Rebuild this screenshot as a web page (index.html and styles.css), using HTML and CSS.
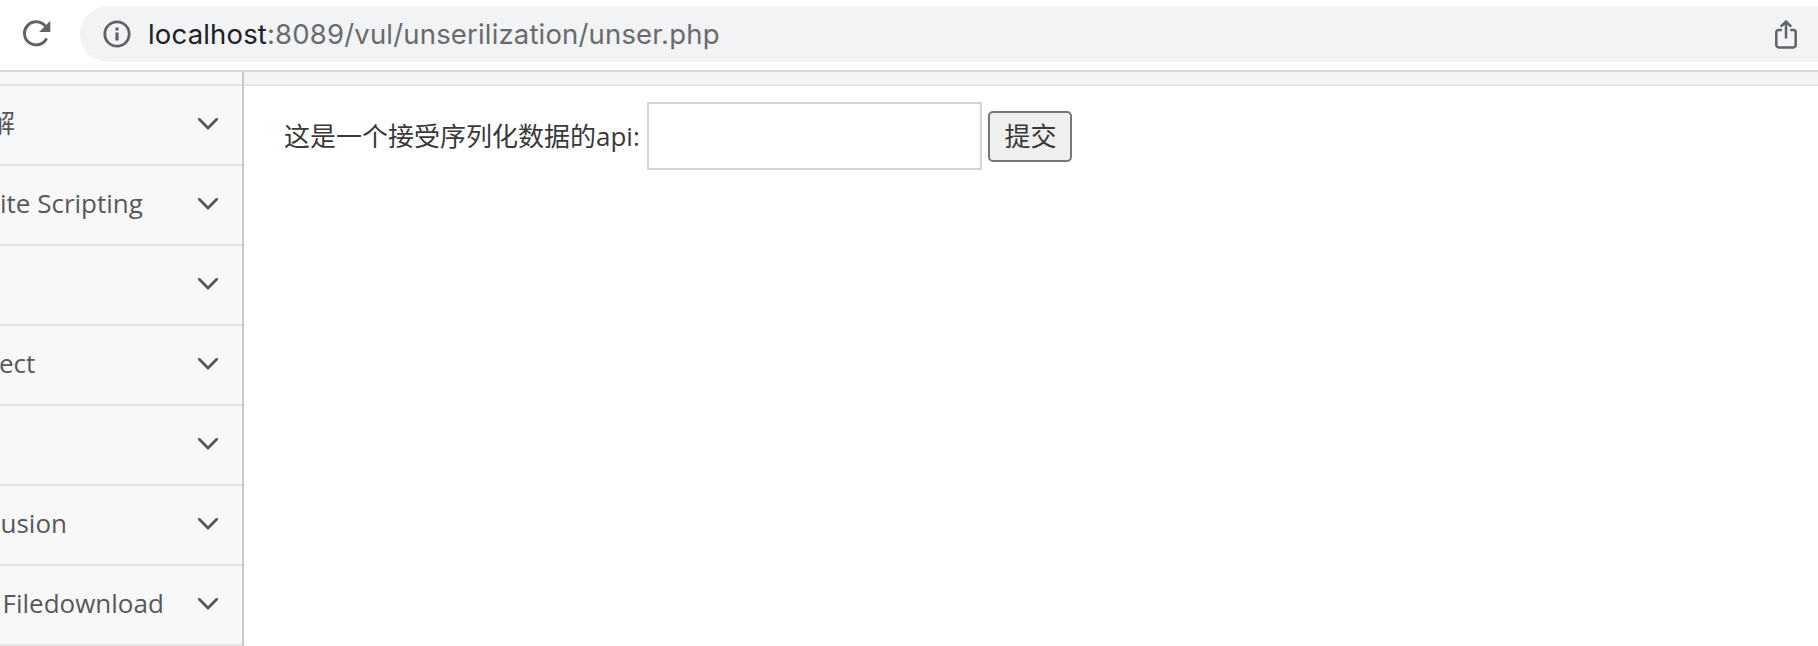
FILE: index.html
```html
<!DOCTYPE html>
<html lang="zh-CN">
<head>
<meta charset="utf-8">
<title>unser.php</title>
<link rel="stylesheet" href="styles.css">
</head>
<body>
<svg class="defs" width="0" height="0">
  <symbol id="chevron" viewBox="0 0 20 12"><path d="M1.3 1.3 10 10 18.7 1.3" fill="none" stroke="#585858" stroke-width="2.7" stroke-linecap="round"/></symbol>
</svg>
<header class="toolbar">
  <svg class="reload" viewBox="0 0 28 28"><path d="M23.6 18.3A11.6 11.6 0 1 1 22.3 6.2" fill="none" stroke="#5f6368" stroke-width="3"/><path d="M27.3.8V12H16.2z" fill="#5f6368"/></svg>
  <div class="address">
    <svg class="info" viewBox="0 0 28 28"><circle cx="14" cy="14" r="12.2" fill="none" stroke="#5f6368" stroke-width="2.8"/><path d="M12.4 7.4h3.2v3h-3.2zM12.4 12.6h3.2v8h-3.2z" fill="#5f6368"/></svg>
    <div class="url"><span class="host">localhost</span><span class="path">:8089/vul/unserilization/unser.php</span></div>
    <svg class="share" viewBox="0 0 22 29"><path d="M6.8 10H3.6a2.3 2.3 0 0 0-2.3 2.3v12.8a2.3 2.3 0 0 0 2.3 2.3h14.8a2.3 2.3 0 0 0 2.3-2.3V12.3a2.3 2.3 0 0 0-2.3-2.3h-3.2M11 18.5V2M5.8 6.7 11 1.6l5.2 5.1" fill="none" stroke="#5f6368" stroke-width="2.5"/></svg>
  </div>
</header>
<div class="page">
  <nav class="sidebar">
    <div class="spacer"></div>
    <div class="item"><span class="label cut-cjk">解</span><svg class="arrow"><use href="#chevron"/></svg></div>
    <div class="item"><span class="label">ite Scripting</span><svg class="arrow"><use href="#chevron"/></svg></div>
    <div class="item"><span class="label"></span><svg class="arrow"><use href="#chevron"/></svg></div>
    <div class="item"><span class="label cut-ect">ect</span><svg class="arrow"><use href="#chevron"/></svg></div>
    <div class="item"><span class="label"></span><svg class="arrow"><use href="#chevron"/></svg></div>
    <div class="item"><span class="label cut-usion">usion</span><svg class="arrow"><use href="#chevron"/></svg></div>
    <div class="item"><span class="label cut-file">Filedownload</span><svg class="arrow"><use href="#chevron"/></svg></div>
  </nav>
  <main class="content">
    <div class="strip"></div>
    <form class="form">
      <label class="caption" for="o">这是一个接受序列化数据的api:</label>
      <input class="field" id="o" type="text">
      <button class="submit" type="button">提交</button>
    </form>
  </main>
</div>
</body>
</html>
```
FILE: styles.css
```css
* { box-sizing: border-box; }
body {
  margin: 0;
  height: 646px;
  overflow: hidden;
  background: #fff;
  font-family: "Open Sans", "Noto Sans CJK SC", sans-serif;
  font-size: 26px;
}
svg { display: block; flex: none; }
.defs { position: absolute; }
.toolbar {
  display: flex;
  align-items: flex-start;
  height: 72px;
  padding: 6px 0 0 22.5px;
  border-bottom: 2px solid #dadada;
}
.reload { width: 28px; height: 28px; margin-top: 14px; }
.address {
  display: flex;
  align-items: center;
  flex: 1;
  height: 56px;
  margin-left: 29.5px;
  padding: 0 21px 0 22.5px;
  border-radius: 28px 0 0 28px;
  background: #f1f3f4;
}
.info { width: 28px; height: 28px; }
.url {
  flex: 1;
  margin-left: 17.5px;
  font: 27.5px/56px Inter, sans-serif;
  letter-spacing: 0.17px;
  white-space: nowrap;
}
.host { color: #202124; }
.path { color: #696b6e; }
.share { width: 22px; height: 29px; margin-top: 1px; }
.page { display: flex; height: 574px; }
.sidebar {
  width: 244px;
  border-right: 2px solid #c8c8c8;
  background: #f8f8f8;
  overflow: hidden;
}
.spacer { height: 14px; border-bottom: 2px solid #e4e4e4; }
.item {
  display: flex;
  align-items: center;
  height: 80px;
  padding-right: 24px;
  border-bottom: 2px solid #e4e4e4;
  color: #585858;
}
.label { flex: 1; line-height: 74px; padding-bottom: 4px; white-space: nowrap; }
.cut-cjk { margin-left: -11px; }
.cut-ect { margin-left: -1px; }
.cut-usion { margin-left: 0.5px; }
.cut-file { margin-left: 2.5px; }
.arrow { width: 20px; height: 12px; margin-top: -2px; }
.content { flex: 1; }
.strip { height: 14px; background: #f4f4f4; border-bottom: 2px solid #e4e4e4; }
.form { display: flex; align-items: center; padding: 16px 0 0 40px; color: #393939; }
.caption { width: 363px; white-space: nowrap; line-height: 68px; }
.field {
  width: 335px;
  height: 68px;
  border: 2px solid #d5d5d5;
  background: #fff;
  font: inherit;
  padding: 8px;
  outline: 0;
}
.submit {
  width: 84px;
  height: 51px;
  margin-left: 6px;
  padding: 0 0 0 1px;
  border: 2px solid #767676;
  border-radius: 5px;
  background: #efefef;
  color: #393939;
  font: inherit;
  line-height: 47px;
}
```
